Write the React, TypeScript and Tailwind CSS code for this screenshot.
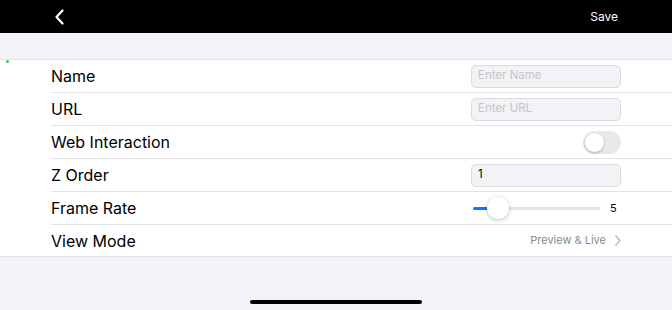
import React from "react";

const FONT = { fontFamily: "Inter, 'Liberation Sans', sans-serif" };

const Row: React.FC<{ label: string; last?: boolean; children?: React.ReactNode }> = ({
  label,
  last,
  children,
}) => {
  return (
    <div className={"flex pl-[51px] " + (last ? "h-[31px]" : "h-[33px]")}>
      <div
        className={
          "flex flex-1 items-center justify-between pr-[51px] " +
          (last ? "" : "border-b border-[#e1e1e4]")
        }
      >
        <span className="text-[16px] text-black">{label}</span>
        {children}
      </div>
    </div>
  );
};

const Field: React.FC<{ placeholder?: string; value?: string }> = ({ placeholder, value }) => (
  <div className="flex h-[23px] w-[150px] items-center rounded-[5px] border border-[#dcdce0] bg-[#f2f2f7] px-[6px] text-[11.5px]">
    {value ? (
      <span className="text-black">{value}</span>
    ) : (
      <span className="text-[#c5c5c9]">{placeholder}</span>
    )}
  </div>
);

export default function App() {
  return (
    <div className="flex h-[310px] w-[672px] flex-col bg-[#f2f2f7]" style={FONT}>
      <div className="flex h-[33px] items-center justify-between bg-black pl-[54px] pr-[54px]">
        <svg width="11" height="16" viewBox="0 0 11 16">
          <path d="M8.5 1.5 L2.5 8 L8.5 14.5" fill="none" stroke="white" strokeWidth="2.2" strokeLinecap="round" strokeLinejoin="round" />
        </svg>
        <span className="text-[12px] text-white">Save</span>
      </div>
      <div className="relative h-[26px]">
        <div className="absolute left-[6px] top-[27px] h-[3px] w-[3px] rounded-full bg-[#34c759]" />
      </div>
      <div className="border-y border-[#e1e1e4] bg-white">
        <Row label="Name">
          <Field placeholder="Enter Name" />
        </Row>
        <Row label="URL">
          <Field placeholder="Enter URL" />
        </Row>
        <Row label="Web Interaction">
          <div className="flex h-[23px] w-[38px] items-center rounded-full bg-[#e9e9eb] p-[2px]">
            <div className="h-[19px] w-[19px] rounded-full bg-white shadow-[0_1px_3px_rgba(0,0,0,0.25)]" />
          </div>
        </Row>
        <Row label="Z Order">
          <Field value="1" />
        </Row>
        <Row label="Frame Rate">
          <div className="flex w-[150px] items-center gap-[10px] pl-[2px]">
            <div className="relative flex h-[3px] w-[127px] items-center rounded-full bg-[#e3e3e6]">
              <div className="h-[3px] w-[18px] rounded-full bg-[#0a7aff]" />
              <div className="absolute left-[14px] h-[22px] w-[22px] rounded-full bg-white shadow-[0_1px_4px_rgba(0,0,0,0.25)]" />
            </div>
            <span className="text-[11px] text-black">5</span>
          </div>
        </Row>
        <Row label="View Mode" last>
          <div className="flex items-center gap-[9px]">
            <span className="text-[11px] text-[#8a8a8e]">Preview &amp; Live</span>
            <svg width="6" height="11" viewBox="0 0 6 11">
              <path d="M0.8 0.8 L5 5.5 L0.8 10.2" fill="none" stroke="#b8b8bd" strokeWidth="1.3" strokeLinecap="round" strokeLinejoin="round" />
            </svg>
          </div>
        </Row>
      </div>
      <div className="flex flex-1 items-end justify-center pb-[6px]">
        <div className="h-[4px] w-[172px] rounded-full bg-black" />
      </div>
    </div>
  );
}
